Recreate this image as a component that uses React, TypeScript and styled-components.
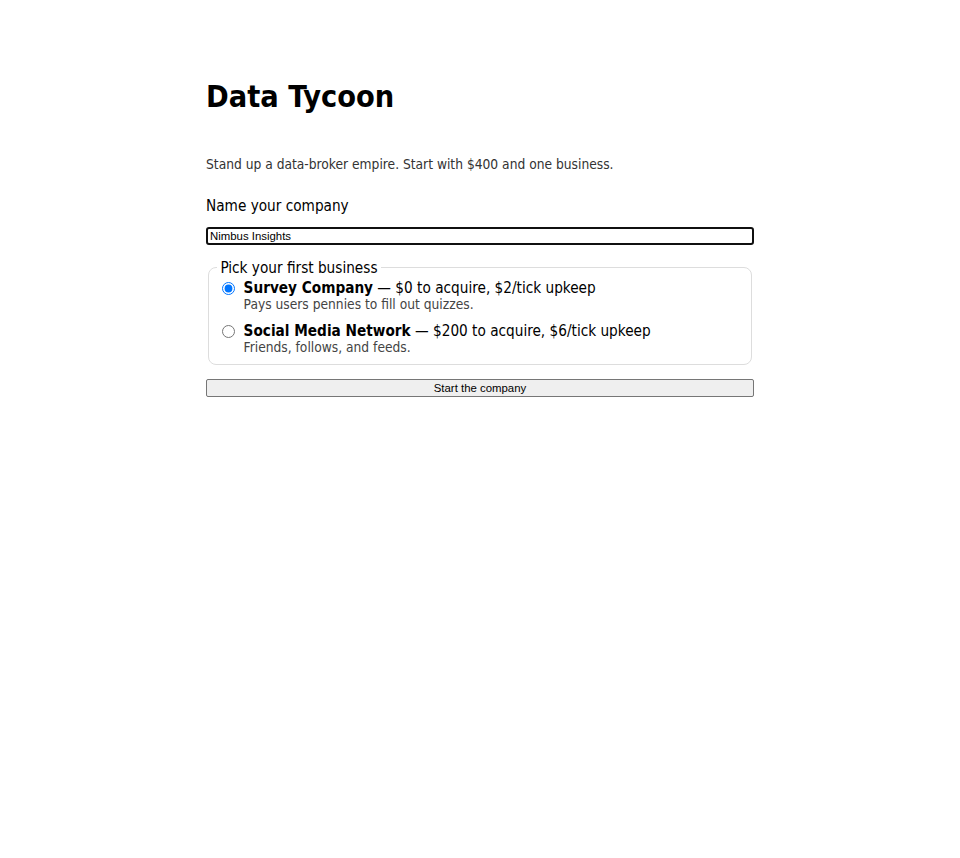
import { useState } from "react";
import styled, { createGlobalStyle } from "styled-components";

const GlobalStyle = createGlobalStyle`
  html, body {
    margin: 0;
    background: #fff;
  }
  body {
    font-family: "DejaVu Sans Condensed", "DejaVu Sans", sans-serif;
    font-size: 15.2px;
    color: #000;
  }
`;

const Page = styled.main`
  max-width: 548px;
  margin: 0 auto;
  padding-top: 79px;
`;

const Title = styled.h1`
  margin: 0 0 42px;
  font-size: 2em;
  font-weight: bold;
`;

const Intro = styled.p`
  margin: 0;
  font-size: 0.9em;
  color: #333;
`;

const Form = styled.form`
  display: flex;
  flex-direction: column;
  margin-top: 24.5px;
`;

const FieldLabel = styled.label`
  font-size: 1em;
`;

const NameInput = styled.input`
  box-sizing: border-box;
  width: 100%;
  height: 18px;
  margin: 12px 0 0;
  padding: 0 2px;
  border: 2px solid #101010;
  border-radius: 3px;
  font-family: "Liberation Sans", Arial, sans-serif;
  font-size: 11.4px;
  color: #000;
  outline: none;
`;

const Choices = styled.fieldset`
  margin: 14.2px 2px 0;
  padding: 2.7px 7.6px 9.6px;
  border: 1px solid #ddd;
  border-radius: 8px;
  display: flex;
  flex-direction: column;
  gap: 9.5px;
`;

const Legend = styled.legend`
  padding: 0 3.8px;
  font-size: 1em;
`;

const Option = styled.label`
  display: flex;
  align-items: flex-start;
  gap: 6px;
  cursor: pointer;
`;

const Radio = styled.input`
  width: 13px;
  height: 13px;
  margin: 3px 3px 0 5px;
  flex-shrink: 0;
`;

const OptionText = styled.div`
  display: flex;
  flex-direction: column;
`;

const OptionTitle = styled.span`
  font-size: 1em;
  strong {
    font-weight: bold;
  }
`;

const OptionDesc = styled.span`
  margin-top: -1px;
  font-size: 0.9em;
  color: #444;
`;

const StartButton = styled.button`
  box-sizing: border-box;
  width: 100%;
  height: 17.5px;
  margin-top: 14px;
  padding: 0 6px;
  border: 1px solid #767676;
  border-radius: 2px;
  background: #efefef;
  font-family: "Liberation Sans", Arial, sans-serif;
  font-size: 11.4px;
  color: #000;
  cursor: pointer;
`;

const businesses = [
  {
    id: "survey",
    name: "Survey Company",
    cost: 0,
    upkeep: 2,
    desc: "Pays users pennies to fill out quizzes.",
  },
  {
    id: "social",
    name: "Social Media Network",
    cost: 200,
    upkeep: 6,
    desc: "Friends, follows, and feeds.",
  },
];

export default function App() {
  const [name, setName] = useState("Nimbus Insights");
  const [pick, setPick] = useState("survey");

  return (
    <>
      <GlobalStyle />
      <Page>
        <Title>Data Tycoon</Title>
        <Intro>Stand up a data-broker empire. Start with $400 and one business.</Intro>
        <Form onSubmit={(e) => e.preventDefault()}>
          <FieldLabel htmlFor="company">Name your company</FieldLabel>
          <NameInput
            id="company"
            value={name}
            onChange={(e) => setName(e.target.value)}
          />
          <Choices>
            <Legend>Pick your first business</Legend>
            {businesses.map((b) => (
              <Option key={b.id}>
                <Radio
                  type="radio"
                  name="business"
                  checked={pick === b.id}
                  onChange={() => setPick(b.id)}
                />
                <OptionText>
                  <OptionTitle>
                    <strong>{b.name}</strong> — ${b.cost} to acquire, ${b.upkeep}/tick upkeep
                  </OptionTitle>
                  <OptionDesc>{b.desc}</OptionDesc>
                </OptionText>
              </Option>
            ))}
          </Choices>
          <StartButton type="submit">Start the company</StartButton>
        </Form>
      </Page>
    </>
  );
}
